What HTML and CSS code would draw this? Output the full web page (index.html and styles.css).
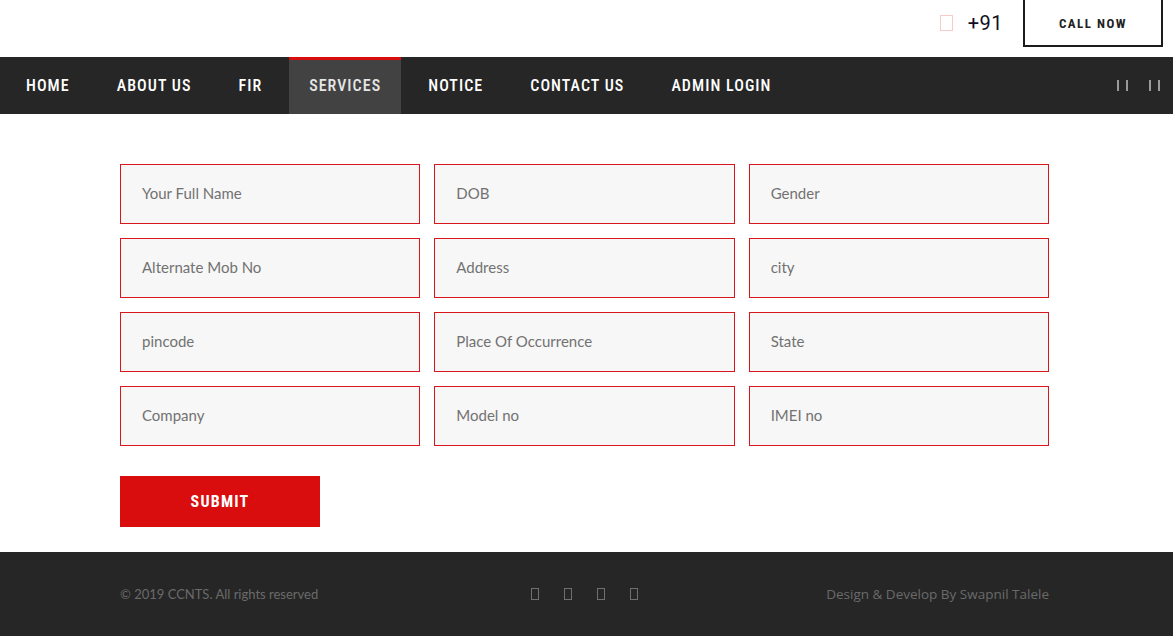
FILE: index.html
```html
<!DOCTYPE html>
<html lang="en">
<head>
<meta charset="utf-8">
<title>CCNTS - Services</title>
<link rel="stylesheet" href="styles.css">
</head>
<body>
<header class="topbar">
  <div class="phone">
    <span class="tofu tofu-pink"></span>
    <span class="phone-num">+91</span>
  </div>
  <a class="call-btn" href="#">CALL NOW</a>
</header>
<nav class="navbar">
  <ul class="menu">
    <li><a href="#">HOME</a></li>
    <li><a href="#">ABOUT US</a></li>
    <li><a href="#">FIR</a></li>
    <li class="active"><a href="#">SERVICES</a></li>
    <li><a href="#">NOTICE</a></li>
    <li><a href="#">CONTACT US</a></li>
    <li><a href="#">ADMIN LOGIN</a></li>
  </ul>
  <div class="nav-icons">
    <span class="bars"><i></i><i></i></span>
    <span class="bars"><i></i><i></i></span>
  </div>
</nav>
<main class="content">
  <form class="form">
    <div class="grid">
      <input class="field" type="text" placeholder="Your Full Name">
      <input class="field" type="text" placeholder="DOB">
      <input class="field" type="text" placeholder="Gender">
      <input class="field" type="text" placeholder="Alternate Mob No">
      <input class="field" type="text" placeholder="Address">
      <input class="field" type="text" placeholder="city">
      <input class="field" type="text" placeholder="pincode">
      <input class="field" type="text" placeholder="Place Of Occurrence">
      <input class="field" type="text" placeholder="State">
      <input class="field" type="text" placeholder="Company">
      <input class="field" type="text" placeholder="Model no">
      <input class="field" type="text" placeholder="IMEI no">
    </div>
    <button class="submit" type="button">SUBMIT</button>
  </form>
</main>
<footer class="footer">
  <div class="footer-inner">
    <p class="copy">© 2019 CCNTS. All rights reserved</p>
    <div class="social">
      <span class="tofu tofu-grey"></span>
      <span class="tofu tofu-grey"></span>
      <span class="tofu tofu-grey"></span>
      <span class="tofu tofu-grey"></span>
    </div>
    <p class="credit">Design &amp; Develop By Swapnil Talele</p>
  </div>
</footer>
</body>
</html>
```
FILE: styles.css
```css
* { box-sizing: border-box; }
html, body { margin: 0; padding: 0; }
body {
  background: #fff;
  font-family: Lato, "Open Sans", sans-serif;
  width: 1173px;
  overflow: hidden;
}

.topbar {
  height: 57px;
  display: flex;
  justify-content: flex-end;
  align-items: flex-start;
  padding-right: 10px;
}
.phone {
  display: flex;
  align-items: center;
  height: 46px;
  margin-right: 20px;
}
.tofu {
  display: inline-block;
  border: 1px solid;
}
.tofu-pink {
  width: 13px;
  height: 16px;
  border-color: #f9caca;
  margin-right: 15px;
}
.phone-num {
  font-family: Roboto, sans-serif;
  font-size: 20px;
  color: #0f0f1e;
  letter-spacing: 0.5px;
}
.call-btn {
  width: 140px;
  height: 47px;
  border: 2px solid #1c1c1c;
  border-top: 0;
  display: flex;
  align-items: center;
  justify-content: center;
  font-family: Roboto, sans-serif;
  font-stretch: condensed;
  font-weight: 700;
  font-size: 13px;
  letter-spacing: 1.5px;
  color: #222;
  text-decoration: none;
  padding-top: 1px;
}

.navbar {
  height: 57px;
  background: #262626;
  display: flex;
  justify-content: space-between;
  align-items: stretch;
}
.menu {
  list-style: none;
  margin: 0;
  padding: 0 0 0 6px;
  display: flex;
  gap: 7px;
}
.menu li {
  display: flex;
}
.menu a {
  display: flex;
  align-items: center;
  padding: 0 20px 1px;
  font-family: Roboto, sans-serif;
  font-stretch: condensed;
  font-weight: 500;
  font-size: 16px;
  letter-spacing: 1.05px;
  color: #fff;
  text-decoration: none;
}
.menu li.active a {
  background: #424242;
  border-top: 3px solid #d80d0d;
  padding-bottom: 4px;
  color: #e6e6e6;
}
.nav-icons {
  display: flex;
  align-items: center;
  gap: 21px;
  padding-right: 13px;
}
.bars {
  display: flex;
  gap: 7px;
}
.bars i {
  display: block;
  width: 2px;
  height: 11px;
  background: #9a9a9a;
}

.content {
  padding: 50px 0 25px 120px;
}
.grid {
  width: 929px;
  display: grid;
  grid-template-columns: repeat(3, 1fr);
  column-gap: 14px;
  row-gap: 14px;
}
.field {
  height: 60px;
  width: 100%;
  border: 1px solid #d9161b;
  background: #f7f7f7;
  padding: 0 21px 2px;
  font-family: Lato, sans-serif;
  font-size: 15px;
  color: #555;
  outline: none;
  margin: 0;
}
.field::placeholder {
  color: #727272;
  opacity: 1;
}
.submit {
  margin-top: 30px;
  width: 200px;
  height: 51px;
  border: 0;
  background: #d90d0d;
  color: #fff;
  font-family: Roboto, sans-serif;
  font-stretch: condensed;
  font-weight: 700;
  font-size: 16px;
  letter-spacing: 1.2px;
  display: block;
  padding: 0;
}

.footer {
  background: #262626;
  height: 84px;
}
.footer-inner {
  width: 929px;
  margin-left: 120px;
  height: 84px;
  display: flex;
  align-items: center;
  justify-content: space-between;
  padding-bottom: 1px;
}
.copy {
  margin: 0;
  width: 360px;
  font-family: Lato, sans-serif;
  font-size: 13px;
  color: #6a6a6a;
}
.social {
  display: flex;
  gap: 25px;
}
.tofu-grey {
  width: 8px;
  height: 12px;
  border-color: #6f6f6f;
}
.credit {
  margin: 0;
  width: 360px;
  text-align: right;
  font-family: "Open Sans", sans-serif;
  font-size: 13.5px;
  color: #6a6a6a;
}
```
